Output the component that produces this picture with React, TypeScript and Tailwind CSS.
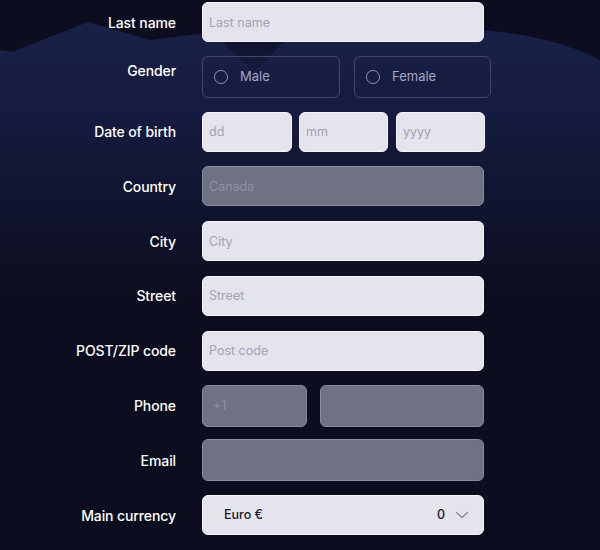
import React from "react";

const Label = ({ children, className = "" }: { children: React.ReactNode; className?: string }) => (
  <div className={`w-[176px] shrink-0 text-right text-[14px] font-medium text-white tracking-[-0.1px] ${className}`}>{children}</div>
);

const inputBase =
  "h-[40px] rounded-[6px] border-[1.5px] border-[#f4f4f8] bg-[#e4e4ec] px-[6px] text-[12.5px] text-[#1c1c2c] placeholder:text-[#a2a3b3] outline-none";
const disabledBase =
  "h-[40px] rounded-[6px] border-[1.5px] border-[#8a8c9e] bg-[#6f7185] px-[6px] text-[12.5px] text-[#9a9cad] placeholder:text-[#8f91a4] outline-none";

const Row = ({ label, children }: { label: string; children: React.ReactNode }) => (
  <div className="flex h-[40px] items-center gap-[26px]">
    <Label>{label}</Label>
    <div className="flex w-[282px] items-center">{children}</div>
  </div>
);

export default function App() {
  return (
    <div
      className="relative h-[550px] w-[600px] overflow-hidden bg-[#0c0d1e]"
      style={{ fontFamily: "Inter, 'Open Sans', sans-serif" }}
    >
      <svg className="absolute left-0 top-0" width="600" height="300" viewBox="0 0 600 300">
        <defs>
          <linearGradient id="m" x1="0" y1="0" x2="0" y2="1">
            <stop offset="0" stopColor="#1a2148" />
            <stop offset="0.35" stopColor="#151b3e" />
            <stop offset="1" stopColor="#0c0d1e" />
          </linearGradient>
          <linearGradient id="v" x1="0" y1="0" x2="0" y2="1">
            <stop offset="0" stopColor="#0d0f24" />
            <stop offset="1" stopColor="#151b3e" />
          </linearGradient>
        </defs>
        <path
          d="M0 50 L12 52 L88 22 L150 40 L230 30 L300 36 L400 32 L480 30 C530 34 570 44 600 60 L600 300 L0 300 Z"
          fill="url(#m)"
        />
        <path d="M220 40 L255 72 L285 40 Z" fill="url(#v)" opacity="0.8" />
      </svg>

      <div className="relative flex flex-col gap-[14.8px] pt-[2px]">
        <Row label="Last name">
          <input className={`${inputBase} w-full`} placeholder="Last name" />
        </Row>
        <div className="flex h-[40px] items-center gap-[26px]">
          <Label className="-mt-[12px]">Gender</Label>
          <div className="flex items-center gap-[14px]">
            {["Male", "Female"].map((g, i) => (
              <div
                key={g}
                className={`flex h-[42px] items-center gap-[12px] rounded-[6px] border-[1.5px] border-[#43486a] pl-[11px] ${i === 0 ? "w-[138px]" : "w-[137px]"}`}
              >
                <span className="h-[14px] w-[14px] rounded-full border-[1.5px] border-[#8c90a9]" />
                <span className="text-[13px] text-[#a2a7c2]">{g}</span>
              </div>
            ))}
          </div>
        </div>
        <Row label="Date of birth">
          <div className="flex w-full gap-[7px]">
            <input className={`${inputBase} w-[90px]`} placeholder="dd" />
            <input className={`${inputBase} w-[89px]`} placeholder="mm" />
            <input className={`${inputBase} w-[89px] ml-[1px]`} placeholder="yyyy" />
          </div>
        </Row>
        <Row label="Country">
          <input className={`${disabledBase} w-full`} placeholder="Canada" disabled />
        </Row>
        <Row label="City">
          <input className={`${inputBase} w-full`} placeholder="City" />
        </Row>
        <Row label="Street">
          <input className={`${inputBase} w-full`} placeholder="Street" />
        </Row>
        <Row label="POST/ZIP code">
          <input className={`${inputBase} w-full`} placeholder="Post code" />
        </Row>
        <Row label="Phone">
          <div className="flex w-full gap-[13px]">
            <input className={`${disabledBase} h-[42px] w-[105px] px-[10px]`} placeholder="+1" disabled />
            <input className={`${disabledBase} h-[42px] w-[164px]`} disabled />
          </div>
        </Row>
        <Row label="Email">
          <input className={`${disabledBase} h-[42px] w-full`} disabled />
        </Row>
        <Row label="Main currency">
          <div className={`${inputBase} flex w-full items-center pl-[21px] pr-[14px]`}>
            <span className="flex-1 text-[12.5px] font-medium text-[#1c1c2c]">Euro €</span>
            <span className="mr-[10px] text-[12.5px] font-medium text-[#1c1c2c]">0</span>
            <svg width="14" height="14" viewBox="0 0 14 14" fill="none">
              <path d="M1.5 4.5 L7 9.5 L12.5 4.5" stroke="#8b8c9c" strokeWidth="1.5" strokeLinecap="round" strokeLinejoin="round" />
            </svg>
          </div>
        </Row>
      </div>
    </div>
  );
}
